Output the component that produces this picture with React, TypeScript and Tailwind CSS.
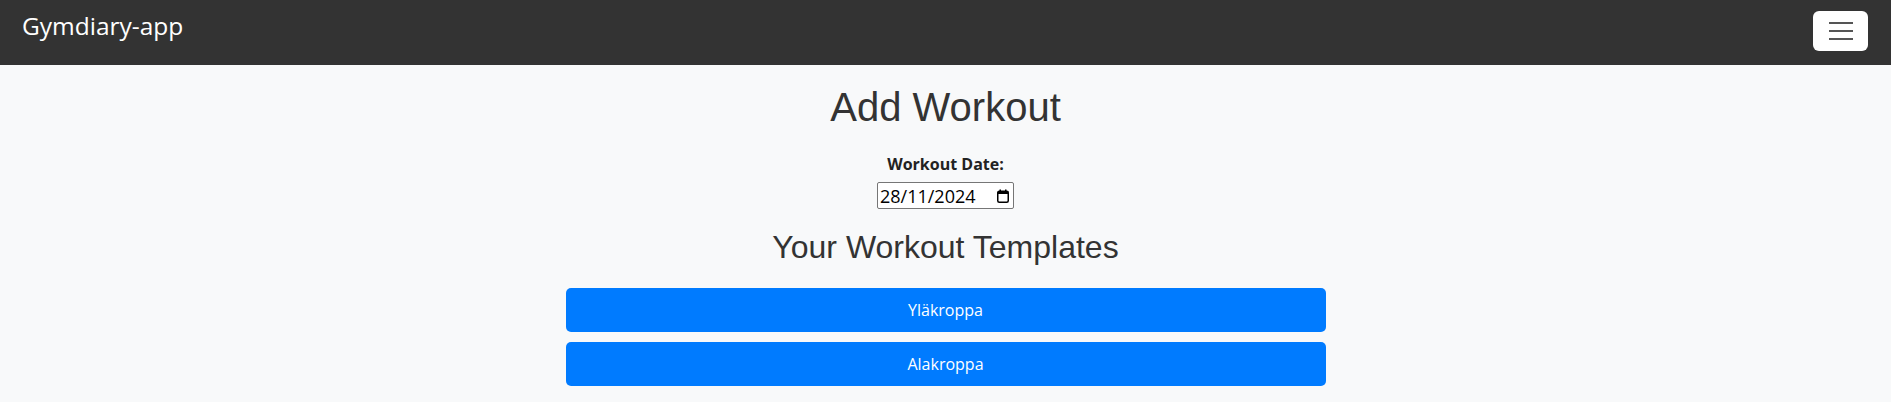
import React from "react";

const templates = ["Yläkroppa", "Alakroppa"];

const CalendarIcon = () => (
  <svg width="12" height="14" viewBox="0 0 12 14" fill="none">
    <rect x="0.75" y="2.25" width="10.5" height="11" rx="1.5" stroke="#000" strokeWidth="1.5" />
    <rect x="0.75" y="2.25" width="10.5" height="2.75" fill="#000" />
    <rect x="2.5" y="0.5" width="1.5" height="2.5" fill="#000" />
    <rect x="8" y="0.5" width="1.5" height="2.5" fill="#000" />
  </svg>
);

const App = () => {
  return (
    <div className="min-h-screen bg-[#f8f9fa] font-['Open_Sans',sans-serif]">
      {/* Navbar */}
      <nav className="h-[65px] bg-[#333333] flex items-center justify-between pl-[22px] pr-[23px]">
        <span className="text-white text-[24.5px] leading-none -mt-[12px]">Gymdiary-app</span>
        <button className="w-[55px] h-[40px] bg-white rounded-[6px] flex flex-col items-center justify-center gap-[6px] -mt-[4px]">
          <span className="block w-[24px] h-[2px] bg-[#555]" />
          <span className="block w-[24px] h-[2px] bg-[#555]" />
          <span className="block w-[24px] h-[2px] bg-[#555]" />
        </button>
      </nav>

      <div className="flex flex-col items-center text-[#333]">
        <h1 className="mt-[18px] text-[40px] leading-[1.2] font-['Liberation_Sans',Arial,sans-serif]">
          Add Workout
        </h1>
        <label className="mt-[21px] text-[16px] leading-[24px] font-bold text-[#222]">Workout Date:</label>
        {/* date field, shown in dd/mm/yyyy */}
        <div className="mt-[6px] w-[137px] h-[27px] border border-[#767676] rounded-[2px] bg-white flex items-center justify-between pl-[2px] pr-[4px]">
          <span className="text-[18px] leading-none text-black">28/11/2024</span>
          <CalendarIcon />
        </div>
        <h2 className="mt-[19px] text-[32px] leading-[1.2] font-['Liberation_Sans',Arial,sans-serif]">
          Your Workout Templates
        </h2>
        <div className="mt-[22px] w-[760px] flex flex-col gap-[10px]">
          {templates.map((t) => (
            <button
              key={t}
              className="h-[44px] w-full bg-[#007bff] text-white text-[16px] rounded-[5px]"
            >
              {t}
            </button>
          ))}
        </div>
      </div>
    </div>
  );
};

export default App;
